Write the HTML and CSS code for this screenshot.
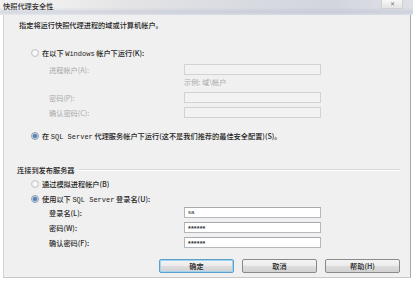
FILE: index.html
```html
<!DOCTYPE html>
<html lang="zh">
<head>
<meta charset="utf-8">
<link rel="stylesheet" href="styles.css">
</head>
<body>
<div class="dialog">
  <div class="titlebar">
    <span class="title">快照代理安全性</span>
    <span class="close">✕</span>
  </div>
  <div class="body">
    <div class="intro">指定将运行快照代理进程的域或计算机帐户。</div>

    <div class="radio-row r1"><span class="radio"></span><span>在以下 <span class="lat">Windows</span> 帐户下运行(K):</span></div>

    <div class="field f1 disabled"><span class="label">进程帐户(A):</span><span class="input"></span></div>
    <div class="example">示例: 域\帐户</div>
    <div class="field f2 disabled"><span class="label">密码(P):</span><span class="input"></span></div>
    <div class="field f3 disabled"><span class="label">确认密码(C):</span><span class="input"></span></div>

    <div class="radio-row r2"><span class="radio checked"></span><span>在 <span class="lat">SQL Server</span> 代理服务帐户下运行(这不是我们推荐的最佳安全配置)(S)。</span></div>

    <div class="group"><span>连接到发布服务器</span><span class="rule"></span></div>

    <div class="radio-row r3"><span class="radio"></span><span>通过模拟进程帐户(B)</span></div>
    <div class="radio-row r4"><span class="radio checked"></span><span>使用以下 <span class="lat">SQL Server</span> 登录名(U):</span></div>

    <div class="field f4"><span class="label">登录名(L):</span><span class="input">sa</span></div>
    <div class="field f5"><span class="label">密码(W):</span><span class="input pw">******</span></div>
    <div class="field f5"><span class="label">确认密码(F):</span><span class="input pw">******</span></div>

    <div class="buttons">
      <span class="btn default">确定</span>
      <span class="btn">取消</span>
      <span class="btn">帮助(H)</span>
    </div>
  </div>
</div>
</body>
</html>
```
FILE: styles.css
```css
html, body {
  margin: 0;
  padding: 0;
  background: #ffffff;
}
body {
  width: 416px;
  height: 286px;
  overflow: hidden;
  font-family: "Noto Sans CJK SC", "Noto Sans", sans-serif;
  font-size: 7.2px;
  font-weight: 500;
  color: #2a2a2a;
}
.dialog {
  margin-left: 3px;
  width: 408px;
  height: 278px;
  background: #f0f0f0;
  border-right: 1px solid #a8a8a8;
  border-bottom: 1px solid #c8c8c8;
  box-sizing: border-box;
  display: flex;
  flex-direction: column;
}
.titlebar {
  height: 15px;
  margin-left: -3px;
  margin-right: -3px;
  display: flex;
  align-items: flex-start;
  justify-content: space-between;
  background:
    linear-gradient(180deg, rgba(255,255,255,0) 0%, rgba(255,255,255,0) 50%, rgba(190,196,212,0.55) 80%, rgba(215,220,230,0.5) 100%),
    linear-gradient(90deg, #f2f2f2 0%, #eeeeee 15%, #e4e4e6 30%, #dadce2 55%, #d2d5de 80%, #dfe1e6 100%);
}
.title {
  margin-left: 3px;
  margin-top: 2px;
  line-height: 9px;
  color: #333;
}
.close {
  margin-right: 10px;
  width: 20px;
  height: 8px;
  line-height: 8px;
  font-size: 6px;
  text-align: center;
  color: #777;
  background: linear-gradient(#f8f8f8, #e4e4e4);
  border: 1px solid #d0d0d0;
  border-top: none;
}
.body {
  flex: 1;
  display: flex;
  flex-direction: column;
  padding-left: 15px;
  border-left: 1px solid #d4d4d4;
}
.intro {
  margin-top: 5px;
  height: 10px;
  line-height: 10px;
  color: #222;
}
.lat {
  font-family: "Liberation Mono", monospace;
  font-size: 7px;
}
.radio-row {
  height: 10px;
  line-height: 10px;
  display: flex;
  align-items: center;
  gap: 3px;
  padding-left: 12px;
  color: #222;
}
.r1 { margin-top: 18px; }
.r2 { margin-top: 13px; }
.r3 { margin-top: 4px; }
.r4 { margin-top: 5px; }
.radio {
  width: 6px;
  height: 6px;
  border-radius: 50%;
  border: 1px solid #c4c4c4;
  background: radial-gradient(circle at 50% 50%, #ffffff 0%, #e8e8e8 100%);
  flex: none;
  box-sizing: content-box;
}
.radio.checked {
  border-color: #8c9fb5;
  background: radial-gradient(circle at 50% 50%, #4a74a8 0%, #6f90bb 45%, #e4ecf4 70%);
}
.field {
  height: 11px;
  display: flex;
  align-items: center;
  padding-left: 30px;
}
.field .label {
  width: 135px;
  flex: none;
  line-height: 10px;
}
.field .input {
  width: 137px;
  height: 11px;
  box-sizing: border-box;
  background: #ffffff;
  border: 1px solid #b4b8bd;
  border-top-color: #a6a9ae;
  font-size: 6px;
  line-height: 9px;
  padding-left: 3px;
  color: #333;
  font-family: "Liberation Sans", sans-serif;
}
.field .input.pw {
  font-size: 7px;
  font-weight: 700;
  letter-spacing: 0.2px;
  line-height: 11px;
}
.field.disabled .label { color: #a8a8a8; font-weight: 400; }
.field.disabled .input {
  background: #f2f2f2;
  border-color: #d2d2d2;
}
.f1 { margin-top: 6px; }
.f2 { margin-top: 5px; }
.f3 { margin-top: 4px; }
.f4 { margin-top: 3px; }
.f5 { margin-top: 4px; }
.example {
  margin-top: 2px;
  height: 10px;
  line-height: 10px;
  padding-left: 165px;
  color: #a8a8a8;
  font-weight: 400;
}
.group {
  margin-top: 24px;
  height: 10px;
  display: flex;
  align-items: center;
  gap: 4px;
  margin-left: -2px;
  color: #222;
}
.group .rule {
  width: 321px;
  height: 1px;
  background: #d5d8dc;
  border-bottom: 1px solid #ffffff;
}
.buttons {
  margin-top: 11px;
  margin-left: 140px;
  display: flex;
  gap: 8px;
}
.btn {
  width: 75px;
  height: 14px;
  box-sizing: border-box;
  border: 1px solid #8a8a8a;
  border-radius: 2px;
  background: linear-gradient(#f4f4f4 0%, #ebebeb 50%, #dddddd 51%, #d2d2d2 100%);
  text-align: center;
  line-height: 12px;
  color: #222;
}
.btn.default {
  border-color: #5aa2cc;
  box-shadow: inset 0 0 0 1px #9fd3ee;
}
```
